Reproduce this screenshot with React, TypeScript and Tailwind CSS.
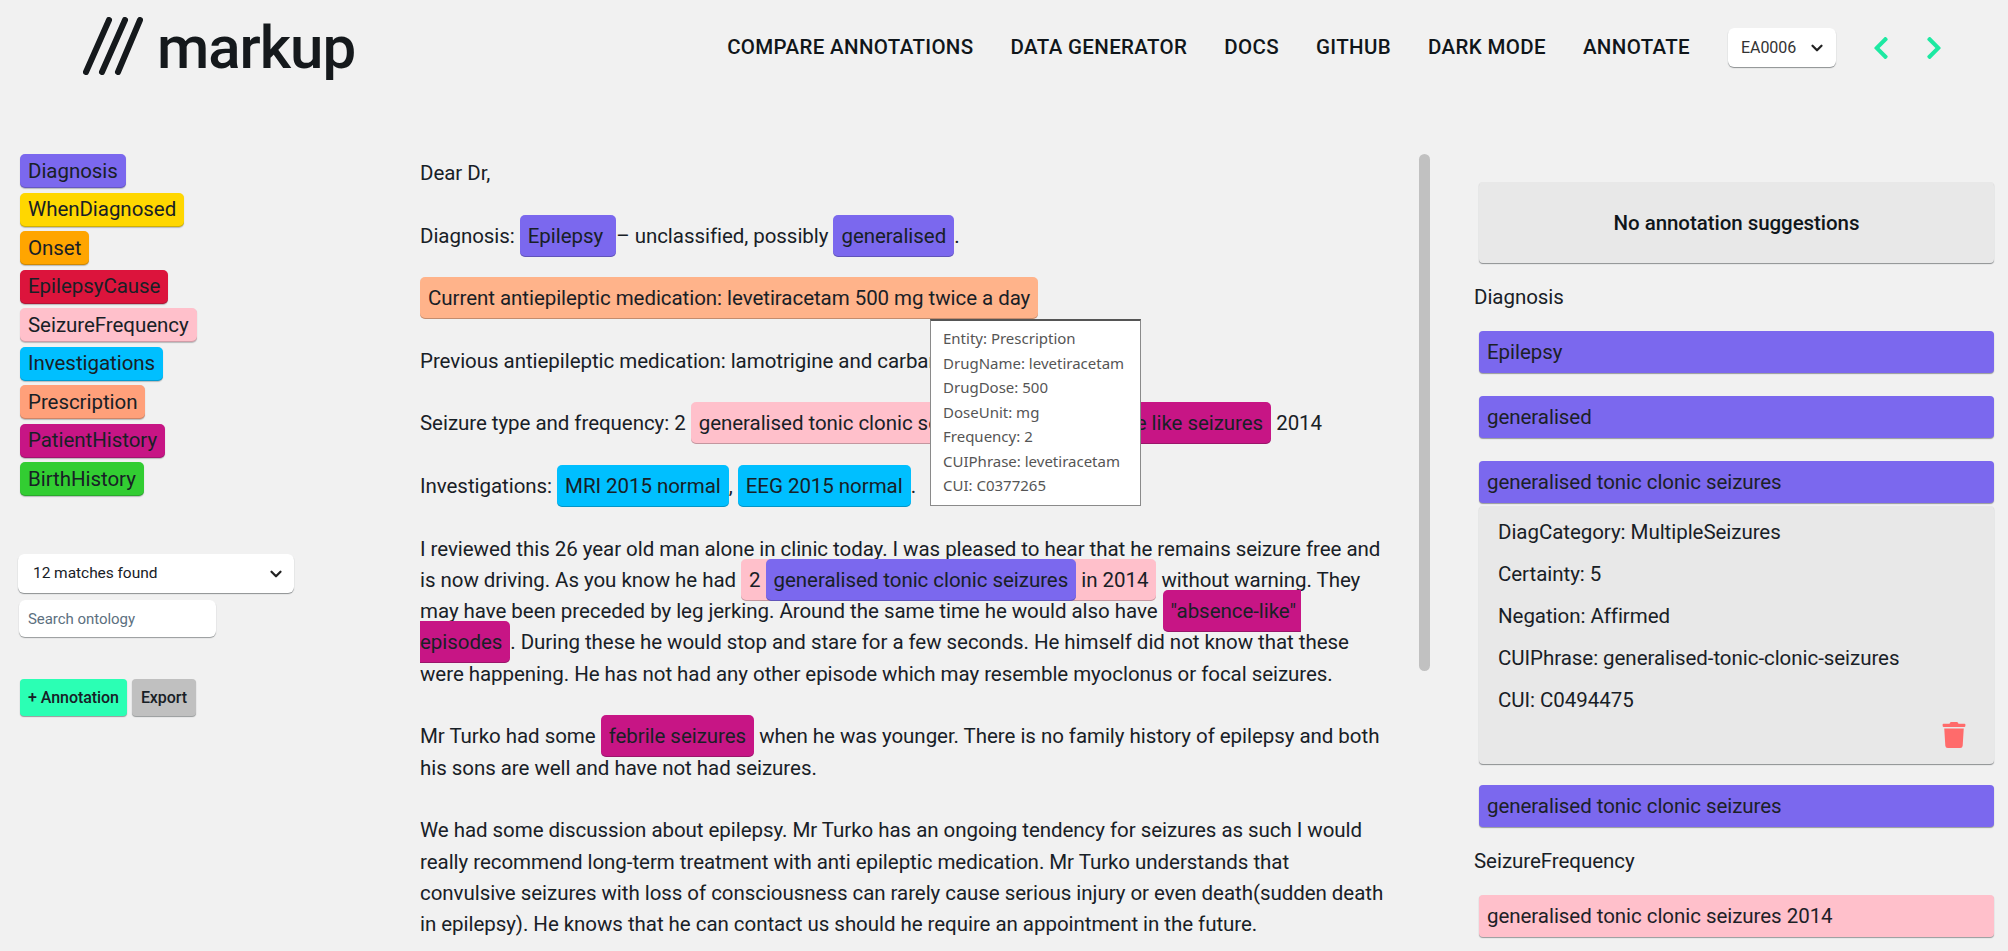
import { ChevronDown } from "lucide-react";
import { FaChevronLeft, FaChevronRight, FaTrash } from "react-icons/fa";
import type { ReactNode } from "react";

const tags = [
  ["Diagnosis", "bg-[#7b68ee]"],
  ["WhenDiagnosed", "bg-[#ffd700]"],
  ["Onset", "bg-[#ffa500]"],
  ["EpilepsyCause", "bg-[#dc143c]"],
  ["SeizureFrequency", "bg-[#ffc0cb]"],
  ["Investigations", "bg-[#00bfff]"],
  ["Prescription", "bg-[#ffa07a]"],
  ["PatientHistory", "bg-[#c71585]"],
  ["BirthHistory", "bg-[#32cd32]"],
];

const navItems = ["COMPARE ANNOTATIONS", "DATA GENERATOR", "DOCS", "GITHUB", "DARK MODE", "ANNOTATE"];

const tooltipRows = [
  "Entity: Prescription",
  "DrugName: levetiracetam",
  "DrugDose: 500",
  "DoseUnit: mg",
  "Frequency: 2",
  "CUIPhrase: levetiracetam",
  "CUI: C0377265",
];

const detailRows = [
  "DiagCategory: MultipleSeizures",
  "Certainty: 5",
  "Negation: Affirmed",
  "CUIPhrase: generalised-tonic-clonic-seizures",
  "CUI: C0494475",
];

function Mark({ color, children }: { color: string; children: ReactNode }) {
  return (
    <span className={`rounded-[5px] px-2 py-[9px] shadow-[inset_0_-1px_0_rgba(16,22,26,0.25)] ${color}`}>{children}</span>
  );
}

function Bar({ color, children }: { color: string; children: ReactNode }) {
  return (
    <div
      className={`ml-[5px] flex h-[42px] items-center rounded-[4px] px-2 text-[#1c2127] shadow-[0_1px_1px_rgba(16,22,26,0.4)] ${color}`}
    >
      {children}
    </div>
  );
}

export default function App() {
  return (
    <div className="h-[951px] w-full overflow-hidden bg-[#f1f1f1] text-[20.5px] tracking-[-0.05px] text-[#182026] [font-family:Roboto,sans-serif]">
      <header className="flex h-[95px] items-center pl-[83px] pr-[61px]">
        <svg width="60" height="58" viewBox="0 0 60 58" className="-mt-1 shrink-0 text-[#15191c]" fill="none">
          <g stroke="currentColor" strokeWidth="6" strokeLinecap="round">
            <line x1="3" y1="55" x2="26" y2="3" />
            <line x1="19" y1="55" x2="42" y2="3" />
            <line x1="35" y1="55" x2="57" y2="3" />
          </g>
        </svg>
        <span className="ml-[14px] text-[60px] leading-none font-medium tracking-[-1px] text-[#15191c]">markup</span>
        <nav className="ml-auto flex items-center gap-[37px] font-medium tracking-[0.35px] text-[#10161a]">
          {navItems.map((item) => (
            <a key={item} className="whitespace-nowrap">
              {item}
            </a>
          ))}
        </nav>
        <button
          type="button"
          className="ml-[38px] flex h-[39px] w-[108px] items-center justify-between rounded-[6px] bg-white pl-[13px] pr-[10px] text-[16px] text-[#333] shadow-[0_1px_1px_rgba(16,22,26,0.45)]"
        >
          EA0006
          <ChevronDown size={18} strokeWidth={3} className="text-[#222]" />
        </button>
        <FaChevronLeft size={26} className="ml-[32px] text-[#1de9a2]" />
        <FaChevronRight size={26} className="ml-[27px] text-[#1de9a2]" />
      </header>

      <main className="mt-[59px] flex">
        <aside className="w-[420px] shrink-0 pl-5">
          <div className="flex flex-col items-start gap-[4.5px]">
            {tags.map(([name, color]) => (
              <span
                key={name}
                className={`flex h-[34px] items-center rounded-[5px] px-2 shadow-[inset_0_-1px_0_rgba(16,22,26,0.2),0_1px_1px_rgba(16,22,26,0.25)] ${color}`}
              >
                {name}
              </span>
            ))}
          </div>
          <button
            type="button"
            className="mt-[58px] -ml-[2px] flex h-[39px] w-[276px] items-center justify-between rounded-[6px] bg-white pl-[15px] pr-[9px] text-[15.5px] shadow-[0_1px_1px_rgba(16,22,26,0.45)]"
          >
            12 matches found
            <ChevronDown size={18} strokeWidth={3} className="text-[#222]" />
          </button>
          <input
            placeholder="Search ontology"
            className="mt-[7px] -ml-px block h-[37px] w-[197px] rounded-[6px] bg-white px-[9px] text-[15px] shadow-[0_1px_1px_rgba(16,22,26,0.4)] outline-none placeholder:text-[#5c7080]"
          />
          <div className="mt-[42px] flex gap-[5px] text-[16px] font-medium">
            <button type="button" className="h-[37px] w-[107px] rounded-[4px] bg-[#2bffb4] shadow-[0_1px_1px_rgba(16,22,26,0.4)]">
              + Annotation
            </button>
            <button type="button" className="h-[37px] w-[64px] rounded-[4px] bg-[#c0c0c0] shadow-[0_1px_1px_rgba(16,22,26,0.4)]">
              Export
            </button>
          </div>
        </aside>

        <section className="relative w-[999px] shrink-0 pt-1 leading-[31.3px] whitespace-pre">
          <p className="mb-[31.3px]">Dear Dr,</p>
          <p className="mb-[31.3px]">
            Diagnosis: <Mark color="bg-[#7b68ee]">Epilepsy </Mark>– unclassified, possibly{" "}
            <Mark color="bg-[#7b68ee]">generalised</Mark>.
          </p>
          <p className="mb-[31.3px]">
            <Mark color="bg-[#ffb38a]">Current antiepileptic medication: levetiracetam 500 mg twice a day</Mark>
          </p>
          <p className="mb-[31.3px]">Previous antiepileptic medication: lamotrigine and carbamazepine</p>
          <p className="mb-[31.3px]">
            Seizure type and frequency: 2 <Mark color="bg-[#ffc0cb]">generalised tonic clonic seizures</Mark> and 2{" "}
            <Mark color="bg-[#c71585]">absence like seizures</Mark> 2014
          </p>
          <p className="mb-[31.3px]">
            Investigations: <Mark color="bg-[#00bfff]">MRI 2015 normal</Mark>, <Mark color="bg-[#00bfff]">EEG 2015 normal</Mark>.
          </p>
          <p className="mb-[31.3px]">
            I reviewed this 26 year old man alone in clinic today. I was pleased to hear that he remains seizure free and
            <br />
            is now driving. As you know he had{" "}
            <Mark color="bg-[#ffc0cb]">
              2 <Mark color="bg-[#7b68ee]">generalised tonic clonic seizures</Mark> in 2014
            </Mark>{" "}
            without warning. They
            <br />
            may have been preceded by leg jerking. Around the same time he would also have{" "}
            <Mark color="bg-[#c71585]">
              "absence-like"{" "}
              <br />
              episodes
            </Mark>
            . During these he would stop and stare for a few seconds. He himself did not know that these
            <br />
            were happening. He has not had any other episode which may resemble myoclonus or focal seizures.
          </p>
          <p className="mb-[31.3px]">
            Mr Turko had some <Mark color="bg-[#c71585]">febrile seizures</Mark> when he was younger. There is no family history of epilepsy and both
            <br />
            his sons are well and have not had seizures.
          </p>
          <p>
            We had some discussion about epilepsy. Mr Turko has an ongoing tendency for seizures as such I would
            <br />
            really recommend long-term treatment with anti epileptic medication. Mr Turko understands that
            <br />
            convulsive seizures with loss of consciousness can rarely cause serious injury or even death(sudden death
            <br />
            in epilepsy). He knows that he can contact us should he require an appointment in the future.
          </p>

          <div className="absolute left-[510px] top-[165px] h-[187px] w-[211px] border border-[#8a8a8a] border-t-2 border-t-[#555] bg-white px-3 pt-[5px] text-[15px] leading-[24.5px] tracking-normal text-[#555] [font-family:'Noto_Sans',sans-serif]">
            {tooltipRows.map((row) => (
              <div key={row}>{row}</div>
            ))}
          </div>
        </section>

        <div className="h-[517px] w-[11px] shrink-0 rounded-full bg-[#c1c1c1]" />

        <aside className="ml-[44px] w-[520px] shrink-0">
          <div className="ml-[5px] mt-[28px] flex h-[81px] items-center justify-center rounded-[4px] bg-[#e8e8e8] pt-px font-medium text-[#10161a] shadow-[0_1px_1px_rgba(16,22,26,0.45)]">
            No annotation suggestions
          </div>
          <div className="my-[22px] leading-6">Diagnosis</div>
          <div className="flex flex-col gap-[23px]">
            <Bar color="bg-[#7b68ee]">Epilepsy</Bar>
            <Bar color="bg-[#7b68ee]">generalised</Bar>
            <div>
              <Bar color="bg-[#7b68ee]">generalised tonic clonic seizures</Bar>
              <div className="ml-[5px] mt-[3px] h-[258px] rounded-[4px] bg-[#e8e8e8] pl-[19px] pr-[27px] pt-[5px] shadow-[0_1px_1px_rgba(16,22,26,0.45)]">
                {detailRows.map((row) => (
                  <div key={row} className="flex h-[42px] items-center">
                    {row}
                  </div>
                ))}
                <div className="mt-px flex justify-end">
                  <FaTrash size={26} className="text-[#ff6b6b]" />
                </div>
              </div>
            </div>
          </div>
          <div className="mt-[21px]">
            <Bar color="bg-[#7b68ee]">generalised tonic clonic seizures</Bar>
          </div>
          <div className="my-[22px] leading-6">SeizureFrequency</div>
          <Bar color="bg-[#ffc0cb]">generalised tonic clonic seizures 2014</Bar>
        </aside>
      </main>
    </div>
  );
}
